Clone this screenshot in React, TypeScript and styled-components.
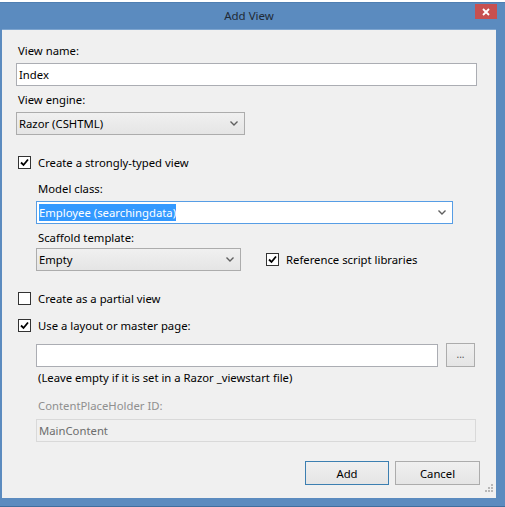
import React from 'react'
import styled, {createGlobalStyle} from 'styled-components'

const GlobalStyle = createGlobalStyle`
    html, body {
        margin: 0;
        padding: 0;
        background: #ffffff;
    }
    body {
        font-family: "Noto Sans", "Open Sans", sans-serif;
        font-size: 11.3px;
        color: #000000;
    }
`

const Page = styled.div`
    width: 505px;
    height: 507px;
    padding-top: 2px;
    box-sizing: border-box;
    background: #ffffff;
    overflow: hidden;
`

const Frame = styled.div`
    height: 505px;
    box-sizing: border-box;
    display: flex;
    flex-direction: column;
    background: #5b8bbf;
    padding: 0 9px 8px 2px;
    border-top: 1px solid #4f7fb2;
    border-bottom: 1px solid #3f6e9e;
`

const TitleBar = styled.div`
    height: 26px;
    display: grid;
    grid-template-columns: 1fr auto 1fr;
    align-items: start;
`

const Title = styled.div`
    margin-top: 5px;
    font-size: 11.5px;
    color: #1f2a36;
`

const CloseButton = styled.div`
    justify-self: end;
    margin-top: 1px;
    margin-right: -1px;
    width: 22px;
    height: 15px;
    background: #c75050;
    display: flex;
    align-items: center;
    justify-content: center;
`

const Client = styled.div`
    flex: 1;
    position: relative;
    background: #f0f0f0;
    border-top: 1px solid #7ea5cf;
    padding: 13px 20px 0 14px;
    display: flex;
    flex-direction: column;
`

const Label = styled.div<{mt?: number, indent?: boolean, disabled?: boolean}>`
    height: 15px;
    line-height: 15px;
    margin-top: ${p => p.mt || 0}px;
    padding-left: ${p => p.indent ? 22 : 2}px;
    color: ${p => p.disabled ? '#8f8f8f' : '#000000'};
    white-space: nowrap;
`

const TextBox = styled.div<{mt?: number, width?: number, indent?: boolean, disabled?: boolean}>`
    margin-top: ${p => p.mt || 0}px;
    margin-left: ${p => p.indent ? 20 : 0}px;
    width: ${p => p.width ? p.width + 'px' : 'auto'};
    height: 23px;
    box-sizing: border-box;
    border: 1px solid ${p => p.disabled ? '#d9d9d9' : '#abadb3'};
    background: ${p => p.disabled ? '#f0f0f0' : '#ffffff'};
    color: ${p => p.disabled ? '#6d6d6d' : '#000000'};
    display: flex;
    align-items: center;
    padding-left: 2px;
    white-space: nowrap;
`

const Selected = styled.span`
    background: #3399ff;
    color: #ffffff;
    padding: 1px 0;
`

const ComboBox = styled.div<{mt?: number, width: number, indent?: boolean, editable?: boolean}>`
    margin-top: ${p => p.mt || 0}px;
    margin-left: ${p => p.indent ? 20 : 0}px;
    width: ${p => p.width}px;
    height: 23px;
    box-sizing: border-box;
    border: 1px solid ${p => p.editable ? '#569de5' : '#acacac'};
    background: ${p => p.editable ? '#ffffff' : 'linear-gradient(#f0f0f0, #e5e5e5)'};
    display: flex;
    align-items: center;
    justify-content: space-between;
    padding: 0 6px 0 2px;
    white-space: nowrap;
`

const Row = styled.div<{mt?: number, indent?: boolean, gap?: number}>`
    display: flex;
    align-items: center;
    margin-top: ${p => p.mt || 0}px;
    margin-left: ${p => p.indent ? 20 : 0}px;
    gap: ${p => p.gap || 0}px;
`

const CheckRow = styled.div<{mt?: number}>`
    display: flex;
    align-items: center;
    gap: 7px;
    height: 15px;
    margin-top: ${p => p.mt || 0}px;
    margin-left: 2px;
    white-space: nowrap;
`

const Box = styled.div`
    width: 13px;
    height: 13px;
    box-sizing: border-box;
    border: 1px solid #333333;
    background: #ffffff;
    display: flex;
    align-items: center;
    justify-content: center;
`

const BrowseButton = styled.div`
    width: 29px;
    height: 24px;
    box-sizing: border-box;
    border: 1px solid #acacac;
    background: linear-gradient(#f0f0f0, #e5e5e5);
    display: flex;
    align-items: center;
    justify-content: center;
    font-size: 10px;
    color: #555555;
    padding-bottom: 2px;
`

const ButtonBar = styled.div`
    display: flex;
    justify-content: flex-end;
    gap: 6px;
    margin-top: 19px;
    margin-right: -4px;
`

const Button = styled.div<{primary?: boolean}>`
    width: ${p => p.primary ? 84 : 85}px;
    height: 24px;
    box-sizing: border-box;
    border: 1px solid ${p => p.primary ? '#3c7fb1' : '#acacac'};
    background: linear-gradient(#f0f0f0, #e5e5e5);
    display: flex;
    align-items: center;
    justify-content: center;
`

const Grip = styled.div`
    position: absolute;
    right: 3px;
    bottom: 3px;
`

const Check = () => (
    <svg width="9" height="9" viewBox="0 0 9 9">
        <path d="M1 4.5 L3.5 7 L8 1.5" stroke="#000" strokeWidth="1.8" fill="none" />
    </svg>
)

const Chevron = () => (
    <svg width="8" height="5" viewBox="0 0 8 5">
        <path d="M0.5 0.5 L4 4 L7.5 0.5" stroke="#606060" strokeWidth="1.4" fill="none" />
    </svg>
)

const CheckBox = ({checked}: {checked?: boolean}) => (
    <Box>{checked && <Check />}</Box>
)

const App = () => {
    return (
        <Page>
            <GlobalStyle />
            <Frame>
                <TitleBar>
                    <div />
                    <Title>Add View</Title>
                    <CloseButton>
                        <svg width="8" height="8" viewBox="0 0 8 8">
                            <path d="M1 1 L7 7 M7 1 L1 7" stroke="#ffffff" strokeWidth="1.8" />
                        </svg>
                    </CloseButton>
                </TitleBar>
                <Client>
                    <Label>View name:</Label>
                    <TextBox mt={5} width={461}>Index</TextBox>
                    <Label mt={6}>View engine:</Label>
                    <ComboBox mt={5} width={229}>
                        <span>Razor (CSHTML)</span>
                        <Chevron />
                    </ComboBox>

                    <CheckRow mt={20}>
                        <CheckBox checked />
                        <span>Create a strongly-typed view</span>
                    </CheckRow>
                    <Label mt={11} indent>Model class:</Label>
                    <ComboBox mt={5} width={417} indent editable>
                        <Selected>Employee (searchingdata)</Selected>
                        <Chevron />
                    </ComboBox>
                    <Label mt={6} indent>Scaffold template:</Label>
                    <Row mt={3} indent gap={23}>
                        <ComboBox width={205}>
                            <span>Empty</span>
                            <Chevron />
                        </ComboBox>
                        <CheckRow>
                            <CheckBox checked />
                            <span>Reference script libraries</span>
                        </CheckRow>
                    </Row>

                    <CheckRow mt={20}>
                        <CheckBox />
                        <span>Create as a partial view</span>
                    </CheckRow>
                    <CheckRow mt={12}>
                        <CheckBox checked />
                        <span>Use a layout or master page:</span>
                    </CheckRow>
                    <Row mt={10} indent gap={8}>
                        <TextBox width={402} />
                        <BrowseButton>...</BrowseButton>
                    </Row>
                    <Label mt={3} indent>(Leave empty if it is set in a Razor _viewstart file)</Label>
                    <Label mt={13} indent disabled>ContentPlaceHolder ID:</Label>
                    <TextBox mt={6} width={440} indent disabled>MainContent</TextBox>

                    <ButtonBar>
                        <Button primary>Add</Button>
                        <Button>Cancel</Button>
                    </ButtonBar>
                    <Grip>
                        <svg width="8" height="8" viewBox="0 0 8 8" fill="#b8b8b8">
                            <rect x="6" y="0" width="2" height="2" />
                            <rect x="3" y="3" width="2" height="2" />
                            <rect x="6" y="3" width="2" height="2" />
                            <rect x="0" y="6" width="2" height="2" />
                            <rect x="3" y="6" width="2" height="2" />
                            <rect x="6" y="6" width="2" height="2" />
                        </svg>
                    </Grip>
                </Client>
            </Frame>
        </Page>
    )
}

export default App
